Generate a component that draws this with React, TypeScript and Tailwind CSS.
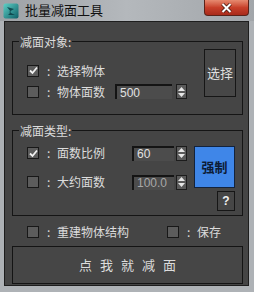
const cjk = "font-['SimSun','Noto_Sans_CJK_SC','Noto_Sans',sans-serif]"

function Check({ on }: { on?: boolean }) {
  return (
    <div className="flex h-[12px] w-[12px] shrink-0 items-center justify-center border border-[#181818] bg-[#5c5c5c]">
      {on && (
        <svg width="9" height="9" viewBox="0 0 9 9">
          <path d="M1 4.5 L3.5 7 L8 1.5" fill="none" stroke="#f2f2f2" strokeWidth="1.8" />
        </svg>
      )}
    </div>
  )
}

function Spinner() {
  return (
    <div className="flex h-[15px] w-[11px] shrink-0 flex-col items-center justify-center gap-[2px] border border-[#1c1c1c] bg-[#5a5a5a]">
      <svg width="7" height="4" viewBox="0 0 7 4">
        <path d="M0 4 L3.5 0 L7 4 Z" fill="#e8e8e8" />
      </svg>
      <svg width="7" height="4" viewBox="0 0 7 4">
        <path d="M0 0 L7 0 L3.5 4 Z" fill="#e8e8e8" />
      </svg>
    </div>
  )
}

function Field({ value, width, dim }: { value: string; width: string; dim?: boolean }) {
  return (
    <div
      className={`flex h-[15px] items-center border-t-2 border-l-2 border-[#141414] bg-[#4c4c4c] pl-[3px] font-['Liberation_Sans',sans-serif] text-[12px] leading-none ${width} ${
        dim ? "text-[#a8a8a8]" : "text-[#e2e2e2]"
      }`}
    >
      {value}
    </div>
  )
}

function Row({ on, label, labelW, children }: { on?: boolean; label: string; labelW: string; children?: React.ReactNode }) {
  return (
    <div className="flex h-[15px] items-center">
      <Check on={on} />
      <span className="ml-[8px] w-[10px] text-[12px] leading-none text-[#dcdcdc]">:</span>
      <span className={`text-[12px] leading-none text-[#dcdcdc] ${labelW}`}>{label}</span>
      {children}
    </div>
  )
}

function Group({ title, className, children }: { title: string; className: string; children: React.ReactNode }) {
  return (
    <div className={`relative ml-[7px] mr-[5px] flex border border-[#151515] ${className}`}>
      <span className="absolute -top-[7px] left-[6px] bg-[#454545] px-[1px] text-[12px] leading-[14px] text-[#dcdcdc]">
        {title}
      </span>
      {children}
    </div>
  )
}

export default function App() {
  return (
    <div className={`flex h-[292px] w-[254px] flex-col overflow-hidden bg-[#aeb2b6] ${cjk}`}>
      {/* title bar */}
      <div className="flex h-[21px] items-start bg-gradient-to-r from-[#9ea2a6] via-[#b4b8bc] to-[#a2a6aa]">
        <svg className="ml-[3px] mt-[3px]" width="16" height="16" viewBox="0 0 16 16">
          <defs>
            <linearGradient id="ic" x1="0" y1="0" x2="1" y2="1">
              <stop offset="0" stopColor="#5fd0c6" />
              <stop offset="1" stopColor="#0d5e66" />
            </linearGradient>
          </defs>
          <rect x="0.5" y="0.5" width="15" height="15" rx="2" fill="url(#ic)" />
          <path d="M4 4 L11 6 L6 9 L12 12 L5 12 L8 9 Z" fill="#0a3d44" opacity="0.85" />
        </svg>
        <span className="ml-[6px] mt-[2px] text-[13px] leading-[16px] text-[#111]">批量减面工具</span>
        <div className="ml-auto mr-[5px] flex h-[16px] w-[45px] items-center justify-center rounded-b-[4px] border border-t-0 border-[#5b2218] bg-gradient-to-b from-[#e68a70] via-[#c8402a] to-[#a82a1a]">
          <svg width="11" height="10" viewBox="0 0 11 10">
            <path d="M1.5 1 L9.5 9 M9.5 1 L1.5 9" stroke="#4a1a10" strokeWidth="3.6" />
            <path d="M1.5 1 L9.5 9 M9.5 1 L1.5 9" stroke="#ffffff" strokeWidth="2" />
          </svg>
        </div>
      </div>

      {/* panel */}
      <div className="ml-[4px] mr-[5px] flex h-[265px] flex-col border border-[#1e1e1e] bg-[#454545] pb-[1px]">
        <Group title="减面对象:" className="mt-[19px] h-[74px]">
          <div className="flex flex-col gap-[6px] pl-[14px] pt-[21px]">
            <Row on label="选择物体" labelW="w-[58px]" />
            <Row label="物体面数" labelW="w-[58px]">
              <Field value="500" width="w-[57px]" />
              <div className="ml-[4px]">
                <Spinner />
              </div>
            </Row>
          </div>
          <button className="ml-auto mr-[6px] mt-[7px] h-[48px] w-[32px] border border-[#161616] bg-[#474747] text-[13px] text-[#dedede]">
            选择
          </button>
        </Group>

        <Group title="减面类型:" className="mt-[15px] h-[87px]">
          <div className="flex flex-col gap-[14px] pl-[14px] pt-[15px]">
            <Row on label="面数比例" labelW="w-[75px]">
              <Field value="60" width="w-[42px]" />
              <div className="ml-[2px]">
                <Spinner />
              </div>
            </Row>
            <Row label="大约面数" labelW="w-[75px]">
              <Field value="100.0" width="w-[42px]" dim />
              <div className="ml-[2px]">
                <Spinner />
              </div>
            </Row>
          </div>
          <div className="ml-auto mr-[7px] mt-[15px] flex flex-col items-end gap-[3px]">
            <button className="h-[42px] w-[41px] border border-[#13233d] bg-[#3f86e8] text-[13px] font-bold text-[#0d1c36]">
              强制
            </button>
            <button className="flex h-[20px] w-[18px] items-center justify-center border border-[#161616] bg-[#464646] font-['Liberation_Sans',sans-serif] text-[12px] font-bold text-[#f0f0f0]">
              ?
            </button>
          </div>
        </Group>

        <div className="mt-[9px] flex h-[13px] items-center pl-[22px]">
          <div className="flex w-[140px] items-center">
            <Check />
            <span className="ml-[8px] w-[10px] text-[12px] leading-none text-[#dcdcdc]">:</span>
            <span className="text-[12px] leading-none text-[#dcdcdc]">重建物体结构</span>
          </div>
          <Check />
          <span className="ml-[8px] w-[10px] text-[12px] leading-none text-[#dcdcdc]">:</span>
          <span className="text-[12px] leading-none text-[#dcdcdc]">保存</span>
        </div>

        <button className="ml-[7px] mr-[5px] mt-[8px] flex h-[38px] items-center justify-center border border-[#141414] bg-[#464646] pl-[8px] text-[13px] tracking-[8px] text-[#dcdcdc]">
          点我就减面
        </button>
      </div>
    </div>
  )
}
